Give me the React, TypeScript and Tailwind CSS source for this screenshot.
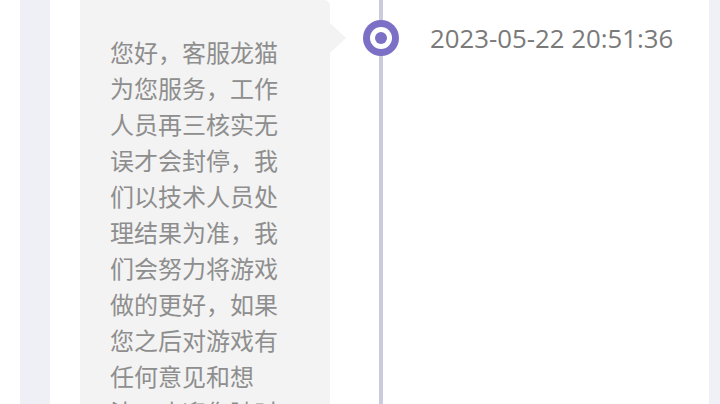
import React from "react";

const message =
  "您好，客服龙猫为您服务，工作人员再三核实无误才会封停，我们以技术人员处理结果为准，我们会努力将游戏做的更好，如果您之后对游戏有任何意见和想法，欢迎您随时联系我们。";

export default function App() {
  return (
    <div className="flex h-[404px] w-[720px] overflow-hidden bg-white">
      <div className="w-[20px] shrink-0" />
      <div className="w-[30px] shrink-0 bg-[#eef0f6]" />
      <div className="w-[30px] shrink-0" />

      {/* Reply bubble */}
      <div className="relative w-[250px] shrink-0 rounded-tr-md bg-[#f3f3f3] pl-[30px] pt-[34px]">
        <p
          className="w-[180px] text-[24px] leading-[36px] text-[#8e8e8e]"
          style={{ fontFamily: '"Noto Sans CJK SC", "Noto Sans", sans-serif' }}
        >
          {message}
        </p>
        <div className="absolute left-full top-[23px] h-0 w-0 border-y-[15px] border-l-[16px] border-y-transparent border-l-[#f3f3f3]" />
      </div>

      {/* Timeline */}
      <div className="flex flex-1">
        <div className="w-[49px] shrink-0" />
        <div className="relative w-[4px] shrink-0 bg-[#c9ccdd]">
          <div className="absolute left-1/2 top-[20px] flex h-[36px] w-[36px] -translate-x-1/2 items-center justify-center rounded-full bg-[#7b6fc6]">
            <div className="flex h-[22px] w-[22px] items-center justify-center rounded-full bg-white">
              <div className="h-[12px] w-[12px] rounded-full bg-[#7b6fc6]" />
            </div>
          </div>
        </div>
        <div
          className="whitespace-nowrap pl-[47px] pt-[20px] text-[25.8px] leading-[36px] text-[#7a7a7a]"
          style={{ fontFamily: '"Open Sans", "Noto Sans", sans-serif' }}
        >
          2023-05-22 20:51:36
        </div>
      </div>

      <div className="w-[11px] shrink-0 bg-[#f0f1f6]" />
    </div>
  );
}
